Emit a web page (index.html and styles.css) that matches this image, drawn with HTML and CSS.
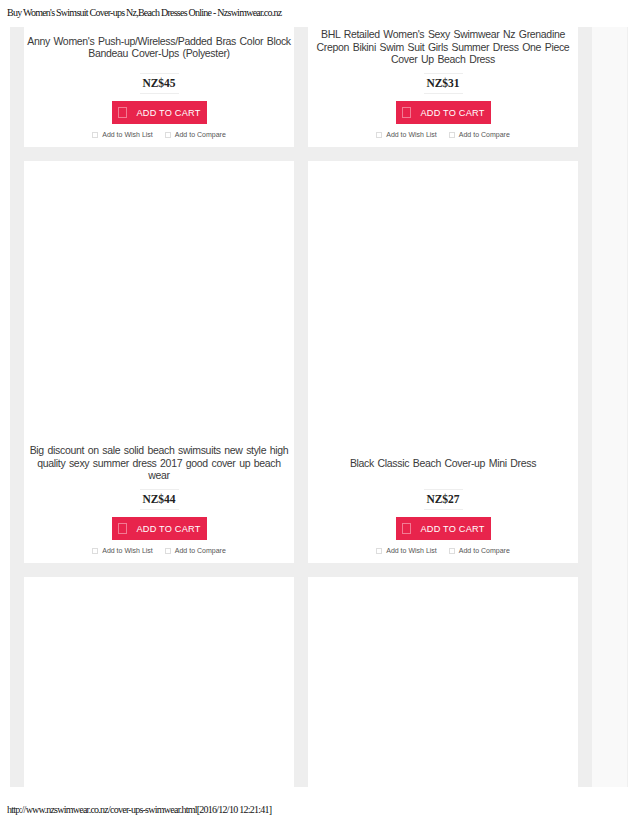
FILE: index.html
```html
<!DOCTYPE html>
<html>
<head>
    <link rel="stylesheet" href="styles.css">
</head>
<body>

    <p class="doc-title">Buy Women's Swimsuit Cover-ups Nz,Beach Dresses Online - Nzswimwear.co.nz</p>

    <div class="page">
        <div class="products">

            <div class="card">
                <div class="card-name">Anny Women's Push-up/Wireless/Padded Bras Color Block Bandeau Cover-Ups (Polyester)</div>
                <div class="price">NZ$45</div>
                <button class="cart-btn"><span class="cart-ico"></span>ADD TO CART</button>
                <div class="card-links"><span><i></i>Add to Wish List</span><span><i></i>Add to Compare</span></div>
            </div>

            <div class="card">
                <div class="card-name">BHL Retailed Women's Sexy Swimwear Nz Grenadine Crepon Bikini Swim Suit Girls Summer Dress One Piece Cover Up Beach Dress</div>
                <div class="price">NZ$31</div>
                <button class="cart-btn"><span class="cart-ico"></span>ADD TO CART</button>
                <div class="card-links"><span><i></i>Add to Wish List</span><span><i></i>Add to Compare</span></div>
            </div>

            <div class="card">
                <div class="card-img"></div>
                <div class="card-name">Big discount on sale solid beach swimsuits new style high quality sexy summer dress 2017 good cover up beach wear</div>
                <div class="price">NZ$44</div>
                <button class="cart-btn"><span class="cart-ico"></span>ADD TO CART</button>
                <div class="card-links"><span><i></i>Add to Wish List</span><span><i></i>Add to Compare</span></div>
            </div>

            <div class="card">
                <div class="card-img"></div>
                <div class="card-name">Black Classic Beach Cover-up Mini Dress</div>
                <div class="price">NZ$27</div>
                <button class="cart-btn"><span class="cart-ico"></span>ADD TO CART</button>
                <div class="card-links"><span><i></i>Add to Wish List</span><span><i></i>Add to Compare</span></div>
            </div>

            <div class="card">
                <div class="card-img"></div>
            </div>

            <div class="card">
                <div class="card-img"></div>
            </div>

        </div>
        <div class="side"></div>
    </div>

    <p class="doc-url">http://www.nzswimwear.co.nz/cover-ups-swimwear.html[2016/12/10 12:21:41]</p>

</body>
</html>
```

FILE: styles.css
```css
body { margin: 0; background: #fff; font-family: "Liberation Sans", Arial, sans-serif; }
.doc-title, .doc-url { margin: 0; font-family: "Liberation Serif", "Times New Roman", serif; font-size: 10px; letter-spacing: -0.75px; color: #111; padding-left: 7px; }
.doc-title { height: 27px; line-height: 25px; }
.doc-url { margin-top: 16px; line-height: 14px; }

.page { display: flex; height: 760px; margin-left: 10px; width: 618px; overflow: hidden; }
.products { width: 554px; padding: 0 14px; background: #eeeeee; display: grid; grid-template-columns: 270px 270px; gap: 14px; align-content: start; }
.side { flex: 1; background: #f9f9f9; border-right: 1px solid #f0f0f0; }

.card { background: #fff; display: flex; flex-direction: column; align-items: center; padding-bottom: 6px; }
.card-img { width: 100%; height: 282px; }
.card:nth-child(5) .card-img, .card:nth-child(6) .card-img { height: 400px; }
.card-name { height: 40px; padding: 0 2px; display: flex; align-items: center; justify-content: center; text-align: center; font-size: 10.5px; letter-spacing: -0.32px; word-spacing: 1px; line-height: 12.5px; color: #3a3a3a; }
.price { margin-top: 6px; width: 39px; height: 19px; border-top: 1px solid #eee; border-bottom: 1px solid #eee; text-align: center; font-family: "Liberation Serif", "Times New Roman", serif; font-weight: bold; font-size: 11.5px; line-height: 19px; color: #222; }
.cart-btn { margin-top: 7px; width: 95px; height: 23px; border: 0; background: #e8244c; color: #fff; font-family: "Liberation Sans", Arial, sans-serif; font-size: 9.2px; letter-spacing: 0.2px; display: flex; align-items: center; justify-content: center; padding: 0; }
.cart-ico { width: 7px; height: 9px; border: 1px solid #f27b93; margin-right: 10px; }
.card-links { margin-top: 5px; height: 12px; display: flex; gap: 12px; font-size: 7px; line-height: 12px; color: #555; }
.card-links i { display: inline-block; width: 4px; height: 4px; border: 1px solid #ddd; margin-right: 4px; vertical-align: -1px; }
```
